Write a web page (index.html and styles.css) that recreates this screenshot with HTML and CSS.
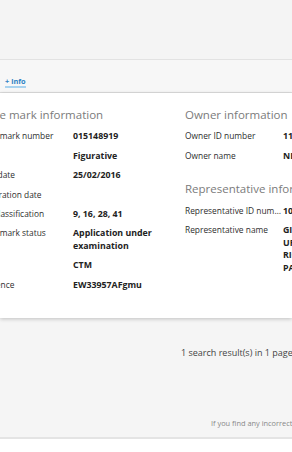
FILE: index.html
```html
<!DOCTYPE html>
<html>
<head>
<meta charset="utf-8">
<link rel="stylesheet" href="styles.css">
</head>
<body>
<div class="page">
  <div class="topbar"></div>
  <div class="result-head">
    <a class="more-link" href="#">+ info</a>
  </div>
  <div class="card">
    <div class="columns">
      <section class="col col-left">
        <h2 class="col-title">Trade mark information</h2>
        <div class="row"><span class="label">Trade mark number</span><span class="value">015148919</span></div>
        <div class="row"><span class="label">Type</span><span class="value">Figurative</span></div>
        <div class="row"><span class="label">Filing date</span><span class="value">25/02/2016</span></div>
        <div class="row"><span class="label">Registration date</span><span class="value"></span></div>
        <div class="row"><span class="label">Nice classification</span><span class="value">9, 16, 28, 41</span></div>
        <div class="row"><span class="label">Trade mark status</span><span class="value">Application under examination</span></div>
        <div class="row"><span class="label">Office</span><span class="value">CTM</span></div>
        <div class="row"><span class="label">Reference</span><span class="value">EW33957AFgmu</span></div>
      </section>
      <section class="col col-right">
        <h2 class="col-title">Owner information</h2>
        <div class="row"><span class="label">Owner ID number</span><span class="value">1129648</span></div>
        <div class="row"><span class="label">Owner name</span><span class="value">NEXUS CREATIVE S.L.</span></div>
        <h2 class="col-title second">Representative information</h2>
        <div class="row"><span class="label">Representative ID number</span><span class="value">10023</span></div>
        <div class="row"><span class="label">Representative name</span><span class="value lines"><span class="line">GIAMBROCONO &amp; C.</span><span class="line">UFFICIO BREVETTI</span><span class="line">RICERCHE</span><span class="line">PATENTS S.P.A.</span></span></div>
      </section>
    </div>
  </div>
  <div class="results-bar">1 search result(s) in 1 page(s)</div>
  <div class="note">If you find any incorrect information, please contact the office.</div>
  <div class="bottom"></div>
</div>
</body>
</html>
```

FILE: styles.css
```css
html, body {
  margin: 0;
  padding: 0;
  overflow: hidden;
  background: #ffffff;
}
body {
  font-family: "Open Sans", "DejaVu Sans", sans-serif;
  color: #333;
}
.page {
  width: 292px;
}
.topbar {
  height: 59px;
  background: #f4f4f4;
  border-bottom: 1px solid #e2e2e2;
}
.result-head {
  height: 33px;
  background: #f7f7f7;
  display: flex;
  align-items: flex-end;
  padding-left: 5px;
  box-sizing: border-box;
  border-bottom: 1px solid #dedede;
}
.more-link {
  font-size: 7.4px;
  font-weight: 700;
  line-height: 10px;
  color: #2f82c4;
  text-decoration: none;
  border-bottom: 2px solid #a9d3ef;
  margin-bottom: 4px;
}
.card {
  background: #fff;
  box-shadow: 0 1px 4px rgba(0,0,0,0.22);
  padding-top: 14px;
  padding-bottom: 23px;
  position: relative;
  z-index: 1;
}
.columns {
  display: flex;
  margin-left: -25px;
  width: 560px;
}
.col {
  flex: none;
}
.col-left {
  width: 210px;
}
.col-right {
  width: 320px;
}
.col-title {
  margin: 0 0 4px;
  font-size: 11.5px;
  line-height: 16px;
  font-weight: 400;
  color: #7b7b7b;
  white-space: nowrap;
}
.col-title.second {
  margin-top: 15.5px;
}
.row {
  display: flex;
  padding: 3.4px 0;
  line-height: 12.6px;
}
.label {
  flex: none;
  width: 98px;
  padding-right: 2px;
  box-sizing: border-box;
  font-size: 8.4px;
  color: #2e2e2e;
  white-space: nowrap;
  overflow: hidden;
  text-overflow: ellipsis;
}
.value {
  flex: none;
  width: 110px;
  font-size: 8.8px;
  font-weight: 700;
  color: #222;
}
.col-right .value {
  width: 200px;
}
.value.lines {
  display: flex;
  flex-direction: column;
}
.line {
  display: block;
  line-height: 12.6px;
  white-space: nowrap;
}
.results-bar {
  background: #f5f5f5;
  padding: 28px 0 0 181px;
  font-size: 9px;
  line-height: 13px;
  color: #444;
  white-space: nowrap;
  height: 59px;
}
.note {
  background: #f5f5f5;
  padding: 13px 0 8px 211px;
  font-size: 7.4px;
  line-height: 11px;
  color: #888;
  white-space: nowrap;
  border-bottom: 2px solid #e4e4e4;
}
.bottom {
  height: 20px;
  background: #fff;
}
```
